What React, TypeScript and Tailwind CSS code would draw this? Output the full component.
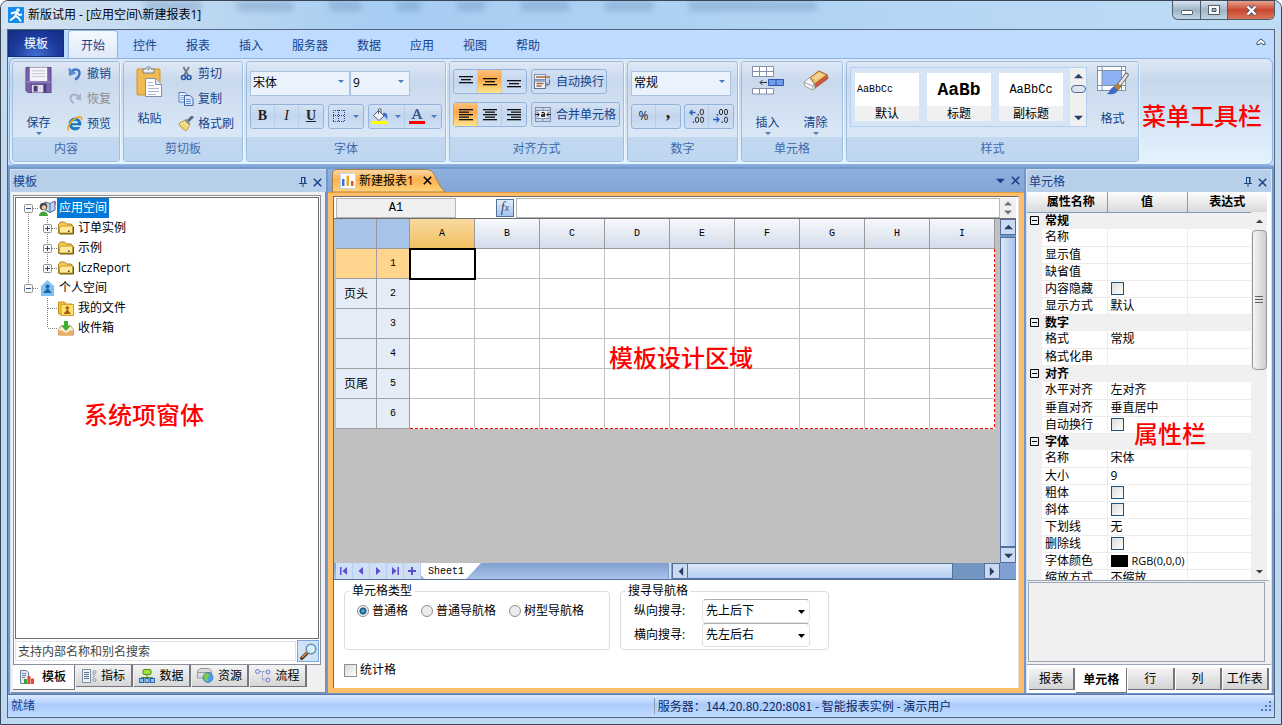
import React from "react";

type Kids = { children?: React.ReactNode };

/* ---------- small shared glyphs ---------- */

function Caret({ className = "" }: { className?: string }) {
  return (
    <svg width="6" height="3" viewBox="0 0 6 3" className={className} aria-hidden="true">
      <path d="M0 0h6L3 3z" fill="#4a7ab8" />
    </svg>
  );
}

function Tri({ dir, fill = "#2b3f66", size = 8 }: { dir: "up" | "down" | "left" | "right"; fill?: string; size?: number }) {
  const d = {
    up: "M0 7L5 2L10 7z",
    down: "M0 3L5 8L10 3z",
    left: "M8 0L3 5L8 10z",
    right: "M2 0L7 5L2 10z",
  }[dir];
  return (
    <svg width={size} height={size} viewBox="0 0 10 10" aria-hidden="true">
      <path d={d} fill={fill} />
    </svg>
  );
}

function PinIcon() {
  return (
    <svg width="8" height="10" viewBox="0 0 8 10" aria-hidden="true">
      <path d="M2.500 0v6M5.500 0v6M6 0v6M2 .5h4.500M0 6.500h8M4 6.500V10" stroke="#1c4587" fill="none" />
    </svg>
  );
}

function CloseIcon({ color = "#1c4587" }: { color?: string }) {
  return (
    <svg width="9" height="9" viewBox="0 0 9 9" aria-hidden="true">
      <path d="M.8.8l7.4 7.4M8.2.8L.8 8.2" stroke={color} strokeWidth="1.6" />
    </svg>
  );
}

/* ---------- ribbon icons ---------- */

function SaveIcon() {
  return (
    <svg width="27" height="28" viewBox="0 0 28 28" aria-hidden="true">
      <path d="M1 1h26v26H3l-2-2z" fill="#7a62ab" stroke="#5b4590" />
      <rect x="5" y="1" width="18" height="14" fill="#f4f4fa" />
      <path d="M7 4.5h14M7 7.5h14M7 10.500h14" stroke="#c3c3cf" />
      <rect x="6" y="18" width="16" height="9" fill="#4b3a7c" />
      <rect x="7" y="19" width="12" height="8" fill="#dcdce8" />
      <rect x="9" y="20" width="4" height="6" fill="#4b3a7c" />
      <path d="M1 16h26" stroke="#a18fcb" />
    </svg>
  );
}

function UndoIcon() {
  return (
    <svg width="14" height="14" viewBox="0 0 14 14" aria-hidden="true">
      <path d="M4 4.500C6 1.500 12 2 11.500 6.500C11.200 9.500 9 11.500 7 12.500" fill="none" stroke="#3f78c9" strokeWidth="2.400" />
      <path d="M1 1.500L1.500 8.500L7.500 6z" fill="#5b93dd" stroke="#2d62ae" strokeWidth=".6" />
    </svg>
  );
}

function RedoIcon() {
  return (
    <svg width="14" height="14" viewBox="0 0 14 14" aria-hidden="true">
      <path d="M10 4.500C8 1.500 2 2 2.500 6.500C2.800 9 4.500 10.500 6 11.500" fill="none" stroke="#a3b3c8" strokeWidth="2" />
      <path d="M13 1.500v7L7 6.500z" fill="#a3b3c8" />
    </svg>
  );
}

function BrowserIcon() {
  return (
    <svg width="16" height="16" viewBox="0 0 16 16" aria-hidden="true">
      <circle cx="8" cy="8" r="4.800" fill="#bfe6fb" stroke="#1f7cc4" strokeWidth="3.200" />
      <path d="M3.500 8.300h10" stroke="#1f6cb0" strokeWidth="2" />
      <path d="M9 10.300h5" stroke="#d6ecf8" strokeWidth="1.400" />
      <path d="M2 14.500C-1 12 4 4 10 1.500C13 .3 15.500.5 14.500 4" fill="none" stroke="#efab1e" strokeWidth="1.700" />
    </svg>
  );
}

function PasteIcon() {
  return (
    <svg width="27" height="31" viewBox="0 0 27 31" aria-hidden="true">
      <rect x="1" y="3" width="23" height="26" rx="1" fill="#f0b951" stroke="#cf9530" />
      <path d="M7 3h3c0-3 5-3 5 0h3v4H7z" fill="#e9edf2" stroke="#76818f" />
      <circle cx="12.500" cy="3" r="1" fill="#76818f" />
      <path d="M9.500 12.500h10l6 6v12h-16z" fill="#fdfdff" stroke="#7d8fab" />
      <path d="M19.500 12.500v6h6" fill="#dde6f2" stroke="#7d8fab" />
      <path d="M12 16.500h5M12 19.500h6M12 22.500h11M12 25.500h11M12 28.500h8" stroke="#a9b8cf" />
    </svg>
  );
}

function CutIcon() {
  return (
    <svg width="14" height="15" viewBox="0 0 14 15" aria-hidden="true">
      <path d="M4.500 1L9 9.500M10 1L5 9.500" stroke="#6d7786" strokeWidth="1.800" />
      <ellipse cx="4.500" cy="11.500" rx="2" ry="2" fill="none" stroke="#2a56a8" strokeWidth="1.600" />
      <ellipse cx="10" cy="11.500" rx="2" ry="2" fill="none" stroke="#2a56a8" strokeWidth="1.600" />
    </svg>
  );
}

function CopyIcon() {
  return (
    <svg width="16" height="14" viewBox="0 0 16 14" aria-hidden="true">
      <path d="M1 .5h6l2.500 2.500v7H1z" fill="#eef4ff" stroke="#5176b8" />
      <path d="M2.500 3.500h4M2.500 5.500h4M2.500 7.500h4" stroke="#7f9fd8" />
      <path d="M6.500 3.500h5.500l3 3v7h-8.500z" fill="#dce9ff" stroke="#3f66ad" />
      <path d="M8 7.500h5M8 9.500h5M8 11.500h5" stroke="#6d90d0" />
    </svg>
  );
}

function BrushIcon() {
  return (
    <svg width="16" height="15" viewBox="0 0 16 15" aria-hidden="true">
      <path d="M10 5L14 1.200" stroke="#5f658a" strokeWidth="3" strokeLinecap="round" />
      <path d="M7 3.500L11.800 8.500" stroke="#9297ac" strokeWidth="2.400" />
      <path d="M6.500 4.500L1 7.500C2 11 5 14 8.500 14.500L11.500 9.500z" fill="#f7e68e" stroke="#c0963a" />
      <path d="M3 9l3.500 3.500M5 8l3.500 3.500" stroke="#d9b65a" />
    </svg>
  );
}

function BorderIcon() {
  return (
    <svg width="12" height="12" viewBox="0 0 12 12" aria-hidden="true">
      <path d="M0 .5h12M0 5.500h12M0 11.500h12M.5 0v12M5.500 0v12M11.500 0v12" stroke="#2f3f94" strokeDasharray="1 1" />
    </svg>
  );
}

function FillIcon() {
  return (
    <svg width="17" height="16" viewBox="0 0 17 16" aria-hidden="true">
      <path d="M6.500 2.500L12 8L7 12.500L1.500 7.500z" fill="#f3f7fd" stroke="#55606f" />
      <path d="M6.500 6V1.500C6.500 0 9 0 9 2v3" fill="none" stroke="#55606f" />
      <path d="M11 5C15 4 16 7 15 12C14 9 13 8 11.500 8z" fill="#3d6fc4" />
      <rect x="0" y="13" width="16" height="3" fill="#ffff00" />
    </svg>
  );
}

function FontColorIcon() {
  return (
    <svg width="16" height="16" viewBox="0 0 16 16" aria-hidden="true">
      <path d="M4 10.500L7.500 1.500h1" stroke="#3c5b94" strokeWidth="1.200" fill="none" />
      <path d="M8 1.500L11.500 10.500" stroke="#3c5b94" strokeWidth="2.200" fill="none" />
      <path d="M5 7.500h5.500M2.500 10.500h3.500M9.500 10.500h4" stroke="#3c5b94" strokeWidth="1" fill="none" />
      <rect x="0" y="13" width="16" height="3" fill="#ff0000" />
    </svg>
  );
}

function LinesIcon({ rows, top }: { rows: [number, number][]; top: number }) {
  const step = rows.length > 3 ? 2.5 : 3;
  return (
    <svg width="16" height="14" viewBox="0 0 16 14" aria-hidden="true">
      {rows.map(([x, w], i) => (
        <rect key={i} x={x} y={top + i * step} width={w} height="1.300" fill="#101010" />
      ))}
    </svg>
  );
}

function WrapIcon() {
  return (
    <svg width="17" height="15" viewBox="0 0 17 15" aria-hidden="true">
      <rect x=".5" y=".5" width="11" height="5" fill="#eef3fa" stroke="#7e90ae" />
      <path d="M2 3h14" stroke="#a6673d" strokeWidth="1.500" />
      <rect x=".5" y="7" width="11" height="7.500" fill="#eef3fa" stroke="#5f7293" />
      <path d="M2.500 9.500h7M2.500 12h5" stroke="#a6673d" strokeWidth="1.500" />
      <path d="M15.500 5.500v5h-3M14 8.500l-2 2l2 2" stroke="#5f7293" fill="none" />
    </svg>
  );
}

function MergeIcon() {
  return (
    <svg width="16" height="15" viewBox="0 0 16 15" aria-hidden="true">
      <rect x=".5" y=".5" width="15" height="14" fill="#cbd7e8" stroke="#7f92b2" />
      <path d="M.5 3.500h15M.5 11.500h15M8 .5v3M8 11.500v3" stroke="#7f92b2" />
      <rect x="4.500" y="4" width="7" height="7" fill="#fff" />
      <path d="M0 7.500h4M2.200 5.500l2 2l-2 2M16 7.500h-4M13.800 5.500l-2 2l2 2" stroke="#222" fill="none" />
      <path d="M6.500 5.800c2-1 3-.2 3 1v2.900M9.500 7.500c-2 0-3 .4-3 1.200s2 1.200 3 0" stroke="#222" fill="none" strokeWidth="1.300" />
    </svg>
  );
}

function DecimalIcon({ more }: { more: boolean }) {
  return (
    <svg width="16" height="16" viewBox="0 0 16 16" aria-hidden="true">
      {more ? (
        <>
          <path d="M6.500 4.500H1M3.500 2L1 4.500L3.500 7" stroke="#2e62c0" strokeWidth="1.400" fill="none" />
          <ellipse cx="12.800" cy="4" rx="1.700" ry="2.800" stroke="#333" fill="none" />
          <ellipse cx="8" cy="11.800" rx="1.600" ry="2.800" stroke="#333" fill="none" />
          <ellipse cx="13" cy="11.800" rx="1.600" ry="2.800" stroke="#333" fill="none" />
          <rect x="8.500" y="6" width="1.400" height="1.400" fill="#333" />
          <rect x="3.800" y="13.500" width="1.400" height="1.400" fill="#333" />
        </>
      ) : (
        <>
          <path d="M0 11.500h6M3.500 9L6 11.500L3.500 14" stroke="#2e62c0" strokeWidth="1.400" fill="none" />
          <ellipse cx="8" cy="4" rx="1.600" ry="2.800" stroke="#333" fill="none" />
          <ellipse cx="13" cy="4" rx="1.600" ry="2.800" stroke="#333" fill="none" />
          <ellipse cx="13" cy="11.800" rx="1.600" ry="2.800" stroke="#333" fill="none" />
          <rect x="3.800" y="6" width="1.400" height="1.400" fill="#333" />
          <rect x="8.500" y="13.500" width="1.400" height="1.400" fill="#333" />
        </>
      )}
    </svg>
  );
}

function InsertCellIcon() {
  return (
    <svg width="32" height="29" viewBox="0 0 32 29" aria-hidden="true">
      <path d="M.5.5h21v10H.5zM.5 5.500h21M7.500.5v10M14.500.5v10" fill="#fff" stroke="#8390a8" />
      <path d="M.5 22.500h21v5.500H.5zM7.500 22.500v5.500M14.500 22.500v5.500" fill="#fff" stroke="#8390a8" />
      <path d="M16.500 13.500h15v6h-15zM24 13.500v6" fill="#6f9be8" stroke="#3158ac" />
      <path d="M15 16.500H8M10.500 14L8 16.500L10.500 19" stroke="#333" fill="none" />
    </svg>
  );
}

function EraserIcon() {
  return (
    <svg width="26" height="26" viewBox="0 0 28 27" aria-hidden="true">
      <g transform="translate(0 2)">
        <path d="M17 3L26 7L27 11L12 22L7 11z" fill="#d0563f" stroke="#a5432f" strokeWidth=".8" />
        <path d="M17 3L26 7L12.500 17L7.500 10z" fill="#e9bc62" stroke="#a5562f" strokeWidth=".8" />
        <path d="M17.500 4.500L23 7L14 13L10 10.200z" fill="#f3d591" />
        <path d="M7 10L1 15L2 19L10.500 23.500L13 21.500L12 16.500z" fill="#f6f6f6" stroke="#8a8a8a" strokeWidth=".8" />
        <path d="M1 15l9.500 4.200l1.500-2.700M10.500 19v4" stroke="#8a8a8a" fill="none" strokeWidth=".8" />
      </g>
    </svg>
  );
}

function FormatIcon() {
  return (
    <svg width="32" height="29" viewBox="0 0 32 29" aria-hidden="true">
      <rect x=".5" y=".5" width="28" height="24" fill="#fdfdff" stroke="#7f93ad" />
      <rect x="5" y="5" width="19" height="14" fill="#8eb0f4" />
      <path d="M.5 4.500h28M.5 19.500h28M5 .5v24M24.500.5v24" stroke="#7f93ad" fill="none" />
      <path d="M29.500 9L22 19" stroke="#6a6a6a" strokeWidth="4.500" strokeLinecap="round" />
      <path d="M29.500 9L22 19" stroke="#e4e4e4" strokeWidth="2.600" strokeLinecap="round" />
      <path d="M20.500 17.500L16.500 21l4 4l3.500-4.500z" fill="#b7823a" stroke="#86591f" strokeWidth=".7" />
      <path d="M17 20.500C13 22 13 26 10 28C15 29 20 28 20.500 24z" fill="#3f6cc8" />
    </svg>
  );
}

/* ---------- ribbon building blocks ---------- */

function Group({ title, width, children }: Kids & { title: string; width: string }) {
  return (
    <section
      className={`${width} flex shrink-0 flex-col overflow-hidden rounded-[3px] border border-[#9fbfdf] shadow-[1px_1px_0_#eef6fd]`}
    >
      <div className="flex flex-1 gap-[3px] bg-linear-to-b from-[#dee8f5] via-[#c9d9ed] via-25% to-[#dae8f6] pt-[7px] pl-[3px]">
        {children}
      </div>
      <h2 className="h-6 bg-linear-to-b from-[#c2d8f0] to-[#bfd6f1] text-center text-xs leading-6 text-[#3e6aaa]">{title}</h2>
    </section>
  );
}

function BigButton({ icon, label, arrow = false }: { icon: React.ReactNode; label: string; arrow?: boolean }) {
  return (
    <button className="-mt-1 flex w-[45px] flex-col items-center text-xs text-[#15428b]">
      <span className="flex h-[34px] items-start pt-px">{icon}</span>
      <span className={arrow ? "mt-4 leading-4" : "mt-3 leading-4"}>{label}</span>
      {arrow && <Caret className="mt-px" />}
    </button>
  );
}

function SmallButton({ icon, label, muted = false }: { icon: React.ReactNode; label: string; muted?: boolean }) {
  return (
    <button className={`flex h-[25px] items-center gap-1 text-xs ${muted ? "text-[#8d8d8d]" : "text-[#15428b]"}`}>
      <span className="flex w-4 justify-center">{icon}</span>
      {label}
    </button>
  );
}

function Cluster({ children }: Kids) {
  return (
    <div className="flex h-[25px] divide-x divide-[#b4cdea] rounded-[3px] border border-[#93b3dc] bg-linear-to-b from-[#d4e2f3] via-[#c3d6ee] via-50% to-[#cfe0f4]">
      {children}
    </div>
  );
}

function Tool({ label, width = "w-6", active = false, children }: Kids & { label: string; width?: string; active?: boolean }) {
  return (
    <button
      aria-label={label}
      className={`${width} flex items-center justify-center text-[#222] ${active ? "bg-linear-to-b from-[#fbc27a] via-[#fba74a] via-40% to-[#ffe58a]" : ""}`}
    >
      {children}
    </button>
  );
}

function Combo({ label, value, width }: { label: string; value: string; width: string }) {
  return (
    <div className={`relative ${width}`}>
      <select
        aria-label={label}
        className="h-[25px] w-full appearance-none border border-[#abc4e3] bg-[#eaf2fb] pl-0.5 text-xs text-black"
      >
        <option>{value}</option>
      </select>
      <Caret className="pointer-events-none absolute top-[11px] right-1.5" />
    </div>
  );
}

function StyleCard({ sample, name, sampleClass }: { sample: string; name: string; sampleClass: string }) {
  return (
    <button className="flex h-12 w-16 flex-col bg-white text-black">
      <span className={`flex w-full flex-1 items-center font-['Liberation_Mono','Noto_Sans_CJK_SC',monospace] ${sampleClass}`}>{sample}</span>
      <span className="h-[15px] w-full bg-[#f0f0f0] text-center text-xs leading-[15px]">{name}</span>
    </button>
  );
}

const LINES: Record<string, [number, number][]> = {
  v: [[1, 14], [3, 10], [1, 14]],
  left: [[1, 14], [1, 10], [1, 14], [1, 10], [1, 14]],
  center: [[1, 14], [3, 10], [1, 14], [3, 10], [1, 14]],
  right: [[1, 14], [5, 10], [1, 14], [5, 10], [1, 14]],
};

function Ribbon() {
  return (
    <div className="mx-px flex h-[107px] shrink-0 gap-[3px] overflow-hidden rounded-md border border-[#8db2e3] bg-linear-to-b from-[#dfe9f5] via-[#c7d8ed] via-20% to-[#e3f3fe] p-0.5">
      <Group title="内容" width="w-[108px]">
        <BigButton icon={<SaveIcon />} label="保存" arrow />
        <div className="-mt-2 flex flex-col pl-[3px]">
          <SmallButton icon={<UndoIcon />} label="撤销" />
          <SmallButton icon={<RedoIcon />} label="恢复" muted />
          <SmallButton icon={<BrowserIcon />} label="预览" />
        </div>
      </Group>
      <Group title="剪切板" width="w-[120px]">
        <BigButton icon={<PasteIcon />} label="粘贴" />
        <div className="-mt-2 flex flex-col pl-[3px]">
          <SmallButton icon={<CutIcon />} label="剪切" />
          <SmallButton icon={<CopyIcon />} label="复制" />
          <SmallButton icon={<BrushIcon />} label="格式刷" />
        </div>
      </Group>
      <Group title="字体" width="w-[200px]">
        <div className="flex flex-col gap-2">
          <div className="flex">
            <Combo label="字体" value="宋体" width="w-[100px]" />
            <Combo label="字号" value="9" width="w-[60px]" />
          </div>
          <div className="flex gap-1">
            <Cluster>
              <Tool label="粗体"><b className="font-['Liberation_Serif',serif] text-sm font-bold">B</b></Tool>
              <Tool label="斜体"><i className="font-['Liberation_Serif',serif] text-sm">I</i></Tool>
              <Tool label="下划线"><u className="font-['Liberation_Serif',serif] text-sm font-bold">U</u></Tool>
            </Cluster>
            <Cluster>
              <Tool label="边框" width="w-[34px] gap-2"><BorderIcon /><Caret /></Tool>
            </Cluster>
            <Cluster>
              <Tool label="填充颜色" width="w-9 gap-1.5"><FillIcon /><Caret /></Tool>
              <Tool label="字体颜色" width="w-9 gap-1.5"><FontColorIcon /><Caret /></Tool>
            </Cluster>
          </div>
        </div>
      </Group>
      <Group title="对齐方式" width="w-[175px]">
        <div className="flex flex-col gap-2">
          <div className="flex gap-1">
            <Cluster>
              <Tool label="顶端对齐"><LinesIcon rows={LINES.v} top={1} /></Tool>
              <Tool label="垂直居中" active><LinesIcon rows={LINES.v} top={3} /></Tool>
              <Tool label="底端对齐"><LinesIcon rows={LINES.v} top={5} /></Tool>
            </Cluster>
            <Cluster>
              <button className="flex items-center gap-[5px] px-0.5 text-xs text-[#15428b]"><WrapIcon />自动换行</button>
            </Cluster>
          </div>
          <div className="flex gap-1">
            <Cluster>
              <Tool label="左对齐" active><LinesIcon rows={LINES.left} top={1} /></Tool>
              <Tool label="居中"><LinesIcon rows={LINES.center} top={1} /></Tool>
              <Tool label="右对齐"><LinesIcon rows={LINES.right} top={1} /></Tool>
            </Cluster>
            <Cluster>
              <button className="flex items-center gap-[5px] px-[3px] text-xs text-[#15428b]"><MergeIcon />合并单元格</button>
            </Cluster>
          </div>
        </div>
      </Group>
      <Group title="数字" width="w-[111px]">
        <div className="flex flex-col gap-2">
          <Combo label="数字格式" value="常规" width="w-[100px]" />
          <div className="flex gap-[3px]">
            <Cluster>
              <Tool label="百分比"><span className="text-xs">%</span></Tool>
              <Tool label="千位分隔"><b className="pb-2 font-['Liberation_Serif',serif] text-lg leading-3">,</b></Tool>
            </Cluster>
            <Cluster>
              <Tool label="增加小数位"><DecimalIcon more /></Tool>
              <Tool label="减少小数位"><DecimalIcon more={false} /></Tool>
            </Cluster>
          </div>
        </div>
      </Group>
      <Group title="单元格" width="w-[102px]">
        <BigButton icon={<InsertCellIcon />} label="插入" arrow />
        <BigButton icon={<EraserIcon />} label="清除" arrow />
      </Group>
      <Group title="样式" width="w-[293px]">
        <div className="-mt-0.5 flex h-[60px] border border-[#b5cfee] bg-[#d6e5f6]">
          <div className="flex gap-2 py-[5px] pr-[7px] pl-1">
            <StyleCard sample="AaBbCc" name="默认" sampleClass="pl-0.5 text-[10px]" />
            <StyleCard sample="AaBb" name="标题" sampleClass="justify-center text-lg font-bold" />
            <StyleCard sample="AaBbCc" name="副标题" sampleClass="justify-center text-xs" />
          </div>
          <div className="flex w-4 flex-col items-center gap-1 bg-[#f0f0f0] py-1">
            <button aria-label="上一行"><Tri dir="up" size={9} /></button>
            <span className="h-2 w-[15px] rounded-sm border border-[#5a6c94] bg-[#dbe6f3]" />
            <button aria-label="下一行" className="mt-auto"><Tri dir="down" size={9} /></button>
          </div>
        </div>
        <BigButton icon={<FormatIcon />} label="格式" />
      </Group>
      <p className="mt-10 font-['Liberation_Serif','Noto_Sans_CJK_SC',serif] text-2xl leading-8 font-medium whitespace-nowrap text-[#ff0000]">
        菜单工具栏
      </p>
    </div>
  );
}

/* ---------- title bar and menu ---------- */

function TitleBar() {
  const smudges = ["w-14", "w-14", "w-8", "w-6", "w-7", "w-12", "w-12", "w-32"];
  return (
    <header className="relative flex h-7 shrink-0 items-center overflow-hidden bg-linear-to-r from-[#d5e3f1] via-[#a6cdf2] via-30% to-[#bfdcf6] pl-[7px]">
      <div aria-hidden="true" className="absolute inset-x-0 top-0 flex items-start gap-9 pl-36 opacity-25 blur-[3px]">
        {smudges.map((w, i) => (
          <span key={i} className={`h-2.5 ${w} bg-[#456a95]`} />
        ))}
      </div>
      <div className="relative flex flex-1 items-center gap-1">
        <svg width="16" height="16" viewBox="0 0 16 16" aria-hidden="true">
          <rect width="16" height="16" rx="1" fill="#138cf0" />
          <circle cx="10" cy="3" r="1.800" fill="#fff" />
          <path d="M3 6.500L8.500 5L11 8L14 7.500M9 5.500L6.500 10L2 13.500M7 8.500L10.500 11L13 14.500" stroke="#fff" strokeWidth="2" fill="none" />
        </svg>
        <h1 className="text-xs text-black">新版试用 - [应用空间\新建报表1]</h1>
      </div>
      <div className="relative mr-1.5 flex h-[19px] self-start overflow-hidden rounded-b-md border border-t-0 border-[#4d5a69]">
        <button aria-label="最小化" className="flex w-7 items-center justify-center border-r border-[#4d5a69] bg-linear-to-b from-[#d8e4ee] via-[#9fb4c7] via-50% to-[#bfd4e4] pt-1">
          <svg width="12" height="5" viewBox="0 0 12 5" aria-hidden="true"><rect x=".5" y=".5" width="11" height="4" rx="1" fill="#fff" stroke="#505868" /></svg>
        </button>
        <button aria-label="最大化" className="flex w-[27px] items-center justify-center border-r border-[#4d5a69] bg-linear-to-b from-[#d8e4ee] via-[#9fb4c7] via-50% to-[#bfd4e4]">
          <svg width="12" height="10" viewBox="0 0 12 10" aria-hidden="true"><path d="M.5.5h11v9H.5zM4 3.500h4v3H4z" fill="#fff" fillRule="evenodd" stroke="#505868" /></svg>
        </button>
        <button aria-label="关闭" className="flex w-[46px] items-center justify-center bg-linear-to-b from-[#e5a08f] via-[#c9452b] via-50% to-[#d9775a]">
          <svg width="13" height="11" viewBox="0 0 13 11" aria-hidden="true">
            <path d="M2.500 1.500l8 8M10.500 1.500l-8 8" stroke="#505060" strokeWidth="4" />
            <path d="M2.500 1.500l8 8M10.500 1.500l-8 8" stroke="#fff" strokeWidth="2.400" />
          </svg>
        </button>
      </div>
    </header>
  );
}

function MenuTabs() {
  const tabs = ["控件", "报表", "插入", "服务器", "数据", "应用", "视图", "帮助"];
  return (
    <nav className="flex h-7 shrink-0 bg-[#bfdbff] text-xs text-[#15428b]">
      <button className="h-[27px] w-14 border border-[#12307a] bg-[radial-gradient(ellipse_at_bottom,#3f6fd2_0%,#1b3a9c_60%,#142c80_100%)] text-white">模板</button>
      <button className="-mb-px ml-1 flex w-[50px] items-center justify-center rounded-t-[4px] border border-b-0 border-[#8db2e3] bg-linear-to-b from-[#f4f9ff] to-[#dfe9f5] pt-0.5">开始</button>
      <div className="flex flex-1 gap-px pl-px">
        {tabs.map((t) => (
          <button key={t} className="px-3.5 pt-[3px]">{t}</button>
        ))}
      </div>
      <button aria-label="折叠功能区" className="mr-2 pb-1">
        <svg width="10" height="8" viewBox="0 0 10 8" aria-hidden="true">
          <path d="M1 4.500L5 1l4 3.500v2H7L5 4.800L3 6.500H1z" fill="#fff" stroke="#3c4b66" />
        </svg>
      </button>
    </nav>
  );
}

/* ---------- left panel ---------- */

function PanelHeader({ title }: { title: string }) {
  return (
    <div className="flex h-[23px] shrink-0 items-center gap-1.5 border-t border-[#d3e3f5] bg-[#b8cfe9] pt-0.5 pr-1 pl-0.5 text-xs text-[#15428b]">
      <h2 className="flex-1">{title}</h2>
      <button aria-label="固定"><PinIcon /></button>
      <button aria-label="关闭"><CloseIcon /></button>
    </div>
  );
}

type Guide = { up?: boolean; down?: boolean; right?: boolean; box?: "+" | "-" };

function GuideCell({ up, down, right, box }: Guide) {
  return (
    <svg width="19" height="20" viewBox="0 0 19 20" className="shrink-0" aria-hidden="true">
      {up && <path d="M9.500 0v10" stroke="#808080" strokeDasharray="1 1" />}
      {down && <path d="M9.500 10v10" stroke="#808080" strokeDasharray="1 1" />}
      {right && <path d="M10 10.500h9" stroke="#808080" strokeDasharray="1 1" />}
      {box && (
        <>
          <rect x="5.500" y="6.500" width="8" height="8" rx="1" fill="#fafafa" stroke="#919191" />
          <path d={box === "+" ? "M7 10.500h5M9.500 8v5" : "M7 10.500h5"} stroke="#2a4a90" />
        </>
      )}
    </svg>
  );
}

function FolderIcon() {
  return (
    <svg width="16" height="14" viewBox="0 0 16 14" aria-hidden="true">
      <path d="M.5 12.500V3.500L2.500 1h4L8.500 3H13L15 5v7.500z" fill="#f3c94f" stroke="#a57c22" />
      <path d="M1.500 12V7L3 5h11.500v7z" fill="#ffe99a" stroke="#c79c35" />
      <path d="M2 13h13.500V6" stroke="#6b5013" fill="none" />
      <rect x="10" y="9.500" width="1.500" height="1.500" fill="#4c370b" />
    </svg>
  );
}

function UserBookIcon() {
  return (
    <svg width="17" height="16" viewBox="0 0 17 16" aria-hidden="true">
      <path d="M6 2l5 1.500L16 1v9l-5 2.500L6 10z" fill="#c3d5ef" stroke="#51699a" />
      <path d="M11 3.500v9" stroke="#51699a" />
      <rect x="15.500" y="1.500" width="1.500" height="3" fill="#d64ac0" />
      <circle cx="4.500" cy="6.500" r="3.800" fill="#4a4a4a" />
      <circle cx="5" cy="7.500" r="2.200" fill="#f2c9a0" />
      <path d="M0 16c0-6 9-6 9 0z" fill="#43a53b" />
    </svg>
  );
}

function HomeIcon() {
  return (
    <svg width="15" height="16" viewBox="0 0 15 16" aria-hidden="true">
      <path d="M7.500 0L15 7h-1v9H1V7H0z" fill="#7fc2f2" />
      <circle cx="7.500" cy="6.500" r="2" fill="#1d64a8" />
      <path d="M3.500 13c0-2 2-1.500 3-4.500h2c1 3 3 2.500 3 4.500z" fill="#1d64a8" />
    </svg>
  );
}

function MyFilesIcon() {
  return (
    <svg width="16" height="15" viewBox="0 0 16 15" aria-hidden="true">
      <path d="M.5 13V1h6l1.500 2h6v10z" fill="#f0c23c" stroke="#c4921f" />
      <rect x="3" y="3.500" width="12.500" height="11" fill="#ffe169" stroke="#d0a12c" />
      <circle cx="9.300" cy="7" r="1.800" fill="#a55b12" />
      <path d="M6 13c0-2 1.500-1.500 2.500-4h1.600c1 2.500 2.500 2 2.500 4z" fill="#a55b12" />
    </svg>
  );
}

function InboxIcon() {
  return (
    <svg width="16" height="15" viewBox="0 0 16 15" aria-hidden="true">
      <path d="M.5 8.500L3 5h10l2.500 3.500v5.500H.5z" fill="#fbeed9" stroke="#c9a275" />
      <path d="M.5 9.500h4l1.500 2h4l1.500-2h4v5H.5z" fill="#e9ae66" />
      <path d="M6 0h4v4.500h3L8 10L3 4.500h3z" fill="#3eaf35" />
    </svg>
  );
}

type TreeRow = { guides: Guide[]; icon: React.ReactNode; label: string; selected?: boolean };

const TREE: TreeRow[] = [
  { guides: [{ box: "-", down: true, right: true }], icon: <UserBookIcon />, label: "应用空间", selected: true },
  { guides: [{ up: true, down: true }, { up: true, down: true, right: true, box: "+" }], icon: <FolderIcon />, label: "订单实例" },
  { guides: [{ up: true, down: true }, { up: true, down: true, right: true, box: "+" }], icon: <FolderIcon />, label: "示例" },
  { guides: [{ up: true, down: true }, { up: true, right: true, box: "+" }], icon: <FolderIcon />, label: "lczReport" },
  { guides: [{ up: true, right: true, box: "-" }], icon: <HomeIcon />, label: "个人空间" },
  { guides: [{}, { up: true, down: true, right: true }], icon: <MyFilesIcon />, label: "我的文件" },
  { guides: [{}, { up: true, right: true }], icon: <InboxIcon />, label: "收件箱" },
];

function ReportIcon() {
  return (
    <svg width="14" height="15" viewBox="0 0 14 15" aria-hidden="true">
      <path d="M.5.5h6l2 2v11h-8z" fill="#dfe8f3" stroke="#6f8299" />
      <path d="M2 3.500h4M2 5.500h4M2 7.500h3" stroke="#6f86a3" />
      <path d="M4 9h3v5H4z" fill="#3ba043" />
      <path d="M7.500 6h3v8h-3z" fill="#e04b2f" />
      <path d="M11 8.500h3V14h-3z" fill="#e04b2f" />
    </svg>
  );
}

function IndexIcon() {
  return (
    <svg width="15" height="14" viewBox="0 0 15 14" aria-hidden="true">
      <path d="M.5.500h8v13h-8z" fill="#eef2f8" stroke="#7f8fa3" />
      <path d="M2 3.500h5M2 5.500h5M2 7.500h5M2 9.500h5" stroke="#5a738f" />
      <circle cx="12.500" cy="3" r="1.500" fill="#dfe9e9" stroke="#7da0a0" />
      <circle cx="12.500" cy="11" r="1.500" fill="#dfe9e9" stroke="#7da0a0" />
      <path d="M10.500 5l2.500 1.500L10.500 9" stroke="#7da0a0" fill="none" />
    </svg>
  );
}

function DataIcon() {
  return (
    <svg width="16" height="14" viewBox="0 0 16 14" aria-hidden="true">
      <rect x="4" y=".5" width="8" height="5" rx="1" fill="#a3e03a" stroke="#4b8f1c" />
      <path d="M8 5.500v3M2.500 10V8.500h11V10" stroke="#4b8f1c" fill="none" />
      <rect x=".5" y="9.500" width="4" height="4" fill="#8fc3f2" stroke="#2967b0" />
      <rect x="6" y="9.500" width="4" height="4" fill="#8fc3f2" stroke="#2967b0" />
      <rect x="11.500" y="9.500" width="4" height="4" fill="#8fc3f2" stroke="#2967b0" />
    </svg>
  );
}

function ResourceIcon() {
  return (
    <svg width="17" height="15" viewBox="0 0 17 15" aria-hidden="true">
      <path d="M.5 3L3 .5h9L14.500 3v7H.5z" fill="#dcdcdc" stroke="#9a9a9a" />
      <path d="M1 4.500h13" stroke="#9a9a9a" />
      <circle cx="11" cy="9.500" r="5" fill="#4aa0e6" stroke="#2467a8" strokeWidth=".6" />
      <path d="M7 7c2-3 6-2 5 .5s-2 2-1 4.500s-3 1-3.500-1z" fill="#7ccc45" />
    </svg>
  );
}

function FlowIcon() {
  return (
    <svg width="16" height="14" viewBox="0 0 16 14" aria-hidden="true">
      <path d="M4.500 2.500h6M7.500 2.500v8.500h3" stroke="#8a99b5" strokeDasharray="2 1" fill="none" />
      <circle cx="2.500" cy="2.500" r="2" fill="#e0e3fb" stroke="#6f78cc" />
      <circle cx="13" cy="3" r="2" fill="#e0e3fb" stroke="#6f78cc" />
      <circle cx="13" cy="11" r="2" fill="#e0e3fb" stroke="#6f78cc" />
    </svg>
  );
}

function LeftPanel() {
  const tabs = [
    { icon: <ReportIcon />, label: "模板" },
    { icon: <IndexIcon />, label: "指标" },
    { icon: <DataIcon />, label: "数据" },
    { icon: <ResourceIcon />, label: "资源" },
    { icon: <FlowIcon />, label: "流程" },
  ];
  return (
    <aside className="flex w-[316px] shrink-0 flex-col border-l border-[#d3e3f5]">
      <PanelHeader title="模板" />
      <div className="flex min-h-0 flex-1 flex-col border-r border-b border-[#7c8ba0] bg-[#f0f0f0] pt-[3px] pr-1 pb-0.5 pl-[2px]">
        <div className="flex min-h-0 flex-1 flex-col border border-[#8a8f98] bg-white p-px">
          <div className="relative min-h-0 flex-1 border border-[#6d6d6d] bg-white pl-[3px]">
            <ul>
              {TREE.map((row) => (
                <li key={row.label} className="flex h-5 items-center text-xs text-black">
                  {row.guides.map((g, i) => (
                    <GuideCell key={i} {...g} />
                  ))}
                  <span className="flex w-[18px] shrink-0 justify-center">{row.icon}</span>
                  <button className={`ml-px px-0.5 leading-5 ${row.selected ? "bg-[#0078d7] text-white" : ""}`}>{row.label}</button>
                </li>
              ))}
            </ul>
            <p className="absolute top-[201px] left-[68px] text-2xl leading-8 font-medium text-[#ff0000]">系统项窗体</p>
          </div>
          <div className="flex h-6 shrink-0 items-center">
            <input
              aria-label="搜索"
              placeholder="支持内部名称和别名搜索"
              className="h-5 min-w-0 flex-1 border border-[#e2e3ea] bg-white pl-0.5 text-xs placeholder:text-[#444]"
            />
            <button aria-label="执行搜索" className="ml-px flex h-[22px] w-[22px] items-center justify-center border border-[#7ba6d8] bg-[#cfe2f6]">
              <svg width="17" height="17" viewBox="0 0 17 17" aria-hidden="true">
                <path d="M1.800 15.200l5.500-5.500" stroke="#5b3420" strokeWidth="3.400" strokeLinecap="round" />
                <path d="M2 14.500l5-5" stroke="#e39a4a" strokeWidth="1.300" />
                <circle cx="11" cy="6" r="4.800" fill="#d6f1fb" stroke="#6d8fae" strokeWidth="1.600" />
              </svg>
            </button>
          </div>
        </div>
        <div className="flex h-[25px] shrink-0 items-start gap-px text-xs text-black">
          {tabs.map((t, i) => (
            <button
              key={t.label}
              className={
                i === 0
                  ? "flex h-[25px] w-[62px] items-center gap-2 border-r border-b border-[#75757f] bg-white pl-[7px] font-medium"
                  : "flex h-[22px] w-[57px] items-center justify-center gap-1 border-r-2 border-b border-[#75757f] bg-linear-to-b from-[#f5f5f5] to-[#d6d6d6]"
              }
            >
              {t.icon}
              {t.label}
            </button>
          ))}
        </div>
      </div>
    </aside>
  );
}

/* ---------- centre: sheet ---------- */

const COLS = ["A", "B", "C", "D", "E", "F", "G", "H", "I"];
const SHEET_ROWS = [
  { n: 1, tag: "" },
  { n: 2, tag: "页头" },
  { n: 3, tag: "" },
  { n: 4, tag: "" },
  { n: 5, tag: "页尾" },
  { n: 6, tag: "" },
];

function Sheet() {
  return (
    <div className="relative w-[659px]">
      <table className="w-full table-fixed border-separate border-spacing-0 text-center text-xs text-black">
        <colgroup>
          <col className="w-[41px]" />
          <col className="w-[33px]" />
          {COLS.map((c) => (
            <col key={c} className="w-[65px]" />
          ))}
        </colgroup>
        <thead>
          <tr className="h-[30px]">
            <th className="border-r border-b border-[#9a9a9a] bg-[#a7c3ea]" />
            <th className="border-r border-b border-[#9a9a9a] bg-[#a7c3ea]" />
            {COLS.map((c, i) => (
              <th
                key={c}
                className={`border-r border-b border-[#9a9a9a] bg-linear-to-b font-['Liberation_Mono',monospace] text-[10px] font-normal ${i === 0 ? "from-[#f9d99f] to-[#f1c05f]" : "from-[#f7f9fc] to-[#d4dcea]"}`}
              >
                {c}
              </th>
            ))}
          </tr>
        </thead>
        <tbody className="[&_td]:p-0">
          {SHEET_ROWS.map((r) => (
            <tr key={r.n} className="h-[30px]">
              <td className={`border-r border-b border-[#a0a0a0] ${r.n === 1 ? "bg-[#ffd58d]" : "bg-[#e4ecf7]"}`}>{r.tag}</td>
              <td className={`border-r border-b border-[#a0a0a0] font-['Liberation_Mono',monospace] text-[10px] ${r.n === 1 ? "bg-[#ffd58d]" : "bg-[#e4ecf7]"}`}>{r.n}</td>
              {COLS.map((c, i) => (
                <td
                  key={c}
                  className={`border-r border-b border-[#c0c0c0] bg-white ${i === 0 && r.n === 1 ? "outline-2 -outline-offset-1 outline-black" : ""}`}
                />
              ))}
            </tr>
          ))}
        </tbody>
      </table>
      {/* print area boundary */}
      <svg className="pointer-events-none absolute right-0 bottom-0 h-[180px] w-[585px]" viewBox="0 0 585 180" aria-hidden="true">
        <path d="M0 179.500h585M584.500 0v180" stroke="#fff" />
        <path d="M0 179.500h585M584.500 0v180" stroke="#ff0000" strokeDasharray="3 2" />
      </svg>
    </div>
  );
}

function NavGlyph({ kind }: { kind: number }) {
  const paths = [
    "M1 1h1.500v8H1zM8 1v8L3.500 5z",
    "M7 1v8L2.500 5z",
    "M3 1v8l4.500-4z",
    "M2 1v8l4.500-4zM7.500 1H9v8H7.500z",
    "M4 1h2v3h3v2H6v3H4V6H1V4h3z",
  ];
  return (
    <svg width="10" height="10" viewBox="0 0 10 10" aria-hidden="true">
      <path d={paths[kind]} fill="#5a4fcf" />
    </svg>
  );
}

function LabeledSelect({ id, label, value }: { id: string; label: string; value: string }) {
  return (
    <div className="flex items-center">
      <label htmlFor={id} className="w-[68px]">{label}</label>
      <div className="relative w-[108px]">
        <select id={id} className="block h-6 w-full appearance-none rounded-sm border border-[#e2e3ea] border-t-[#abadb3] bg-white pl-[3px] text-xs text-black">
          <option>{value}</option>
        </select>
        <svg width="7" height="4" viewBox="0 0 7 4" className="pointer-events-none absolute top-[11px] right-[5px]" aria-hidden="true">
          <path d="M0 0h7L3.500 4z" fill="#000" />
        </svg>
      </div>
    </div>
  );
}

function Center() {
  const radios = ["普通格", "普通导航格", "树型导航格"];
  const scrollBtn = "flex h-4 w-4 shrink-0 items-center justify-center border border-[#54709c] bg-[#c9daf2]";
  return (
    <main className="flex min-w-0 flex-1 flex-col">
      <div className="flex h-[23px] shrink-0 bg-linear-to-b from-[#8db0dd] to-[#83a5d6]">
        <div className="relative flex h-[23px] w-[118px] items-center gap-[3px] pl-2.5">
          <svg viewBox="0 0 114 23" className="absolute inset-y-0 left-1 h-[23px] w-[114px]" aria-hidden="true">
            <defs>
              <linearGradient id="tabfill" x1="0" y1="0" x2="0" y2="1">
                <stop offset="0" stopColor="#fbd9a9" />
                <stop offset=".45" stopColor="#fdb24f" />
                <stop offset="1" stopColor="#ffd27a" />
              </linearGradient>
            </defs>
            <path d="M.5 23V5Q.5 .5 5 .5h90c9 0 10 17 18.500 22.500z" fill="url(#tabfill)" stroke="#a97f4b" />
          </svg>
          <svg width="16" height="16" viewBox="0 0 16 16" className="relative ml-0.5 shrink-0" aria-hidden="true">
            <rect x=".5" y=".5" width="15" height="15" fill="#fdfeff" stroke="#c9d7ea" />
            <rect x="2" y="6" width="2.500" height="7" fill="#3d74cf" />
            <rect x="6.500" y="2.500" width="2.500" height="10.500" fill="#f0a51b" />
            <rect x="11" y="8" width="2.500" height="5" fill="#e0572d" />
          </svg>
          <span className="relative text-xs whitespace-nowrap text-black">新建报表1</span>
          <button aria-label="关闭标签" className="relative ml-1.5"><CloseIcon color="#000" /></button>
        </div>
        <div className="ml-auto flex items-center gap-1.5 pr-1">
          <button aria-label="标签列表"><Tri dir="down" fill="#15428b" size={9} /></button>
          <button aria-label="关闭"><CloseIcon /></button>
        </div>
      </div>
      <div className="flex min-h-0 flex-1 flex-col border-t border-[#e79b3d] bg-[#ffbf69] px-[5px] pt-[3px] pb-[5px]">
        <div className="flex min-h-0 flex-1 flex-col border-t border-l border-[#6d6d6d] border-r border-r-[#e0e0e0] bg-white pr-0.5">
          <div className="flex h-[22px] shrink-0 items-center border-b border-[#6d6d6d] pt-px pl-0.5">
            <input aria-label="单元格地址" defaultValue="A1" className="h-5 w-[120px] border border-[#b5b5b5] bg-[#f0f0f0] text-center font-['Liberation_Mono',monospace] text-xs text-black" />
            <button aria-label="插入函数" className="mr-0.5 ml-10 flex h-[18px] w-[18px] items-center justify-center border border-[#54709c] bg-linear-to-b from-[#e2edfa] to-[#a8c4ea] font-['Liberation_Serif',serif] text-sm leading-none text-[#31487a] italic">
              f<span className="text-[10px]">x</span>
            </button>
            <input aria-label="公式" className="h-5 min-w-0 flex-1 border border-[#b5b5b5] bg-white" />
            <div className="flex w-4 flex-col items-center bg-[#f0f0f0] py-0.5">
              <Tri dir="up" fill="#707070" size={8} />
              <Tri dir="down" fill="#707070" size={8} />
            </div>
          </div>
          <div className="flex min-h-0 flex-1 bg-[#c0c0c0] pl-0.5">
            <div className="relative min-w-0 flex-1 overflow-hidden">
              <Sheet />
              <p className="absolute top-[123px] left-[273px] text-2xl leading-8 font-medium whitespace-nowrap text-[#ff0000]">模板设计区域</p>
            </div>
            <div className="flex w-4 shrink-0 flex-col bg-[#7296bf]">
              <button aria-label="向上滚动" className={scrollBtn}><Tri dir="up" size={9} /></button>
              <div className="mt-0.5 flex-1 border border-[#54709c] bg-linear-to-r from-[#dde9f9] to-[#a9c5ec]" />
              <button aria-label="向下滚动" className={scrollBtn}><Tri dir="down" size={9} /></button>
            </div>
          </div>
          <div className="flex h-[17px] shrink-0 border-b border-[#54709c] bg-linear-to-b from-[#7f9fd0] to-[#a9c3e8] pl-0.5">
            {["首页", "上一张", "下一张", "末页", "新建"].map((n, i) => (
              <button key={n} aria-label={n} className="flex w-[17px] items-center justify-center border-r border-[#b4cdf0] bg-[#cfdff5]">
                <NavGlyph kind={i} />
              </button>
            ))}
            <button className="relative w-[60px] pt-px pr-2.5 font-['Liberation_Mono',monospace] text-[10px] leading-4 text-black">
              <svg viewBox="0 0 60 16" className="absolute inset-0 h-4 w-[60px]" aria-hidden="true"><path d="M0 0h60L45 16H4L0 12z" fill="#fff" /></svg>
              <span className="relative">Sheet1</span>
            </button>
            <div className="ml-auto w-1 border-x border-[#7f9fd0] bg-[#cfdff5]" />
            <div className="flex w-[328px] bg-[#7296bf]">
              <button aria-label="向左滚动" className={scrollBtn}><Tri dir="left" size={9} /></button>
              <div className="h-4 w-[265px] border border-l-0 border-[#54709c] bg-linear-to-b from-[#dde9f9] to-[#b4cdf0]" />
              <span className="flex-1" />
              <button aria-label="向右滚动" className={scrollBtn}><Tri dir="right" size={9} /></button>
            </div>
            <div className="w-4 bg-[#7f9fd0]" />
          </div>
          <form className="flex h-[108px] shrink-0 flex-col justify-between px-2.5 pt-[3px] pb-2.5 text-xs text-black">
            <div className="flex gap-2.5">
              <fieldset className="h-[67px] w-[266px] rounded-[4px] border border-[#d5dfe5] px-3">
                <legend className="-ml-[7px] px-0.5 leading-4">单元格类型</legend>
                <div className="flex gap-[13px] pt-0.5">
                  {radios.map((r, i) => (
                    <label key={r} className="flex items-center gap-[3px] leading-5">
                      <input
                        type="radio"
                        name="cellType"
                        defaultChecked={i === 0}
                        className="size-3 appearance-none rounded-full border border-[#8e8f8f] bg-[#ececec] checked:bg-[radial-gradient(circle,#5cc4f2_0,#0b4a7a_45%,#f0f0f0_55%)]"
                      />
                      {r}
                    </label>
                  ))}
                </div>
              </fieldset>
              <fieldset className="h-[67px] w-[209px] rounded-[4px] border border-[#d5dfe5] px-[13px]">
                <legend className="-ml-2 px-0.5 leading-4">搜寻导航格</legend>
                <LabeledSelect id="vsearch" label="纵向搜寻:" value="先上后下" />
                <LabeledSelect id="hsearch" label="横向搜寻:" value="先左后右" />
              </fieldset>
            </div>
            <label className="flex items-center gap-[3px] leading-4">
              <input type="checkbox" className="size-[13px] appearance-none border border-[#8e8f8f] bg-linear-to-br from-[#d8d8d8] to-white" />
              统计格
            </label>
          </form>
        </div>
      </div>
    </main>
  );
}

/* ---------- right panel ---------- */

type Prop = { name: string; value?: string; check?: boolean; swatch?: boolean; group?: boolean };

const PROPS: Prop[] = [
  { name: "常规", group: true },
  { name: "名称" },
  { name: "显示值" },
  { name: "缺省值" },
  { name: "内容隐藏", check: true },
  { name: "显示方式", value: "默认" },
  { name: "数字", group: true },
  { name: "格式", value: "常规" },
  { name: "格式化串" },
  { name: "对齐", group: true },
  { name: "水平对齐", value: "左对齐" },
  { name: "垂直对齐", value: "垂直居中" },
  { name: "自动换行", check: true },
  { name: "字体", group: true },
  { name: "名称", value: "宋体" },
  { name: "大小", value: "9" },
  { name: "粗体", check: true },
  { name: "斜体", check: true },
  { name: "下划线", value: "无" },
  { name: "删除线", check: true },
  { name: "字体颜色", value: "RGB(0,0,0)", swatch: true },
  { name: "缩放方式", value: "不缩放" },
];

function RightPanel() {
  const tabs = ["报表", "单元格", "行", "列", "工作表"];
  return (
    <aside className="flex w-[246px] shrink-0 flex-col border-x border-[#d3e3f5]">
      <PanelHeader title="单元格" />
      <div className="flex min-h-0 flex-1 flex-col bg-[#f0f0f0]">
        <div className="relative min-h-0 flex-1 overflow-hidden border-r-4 border-b border-r-white border-b-[#9aa5b5]">
          <table className="w-full table-fixed border-collapse text-left text-xs text-black">
            <colgroup>
              <col className="w-[15px]" />
              <col className="w-[65px]" />
              <col className="w-20" />
              <col className="w-20" />
            </colgroup>
            <thead>
              <tr className="h-5 bg-linear-to-b from-[#fdfdfd] to-[#d9d9d9] text-center leading-[18px] font-bold">
                <th colSpan={2} className="border-r border-b border-[#7a9cc5] pl-2">属性名称</th>
                <th className="border-r border-b border-[#7a9cc5]">值</th>
                <th className="border-b border-[#7a9cc5]">表达式</th>
              </tr>
            </thead>
            <tbody>
              {PROPS.map((p, i) =>
                p.group ? (
                  <tr key={i} className="h-[17px] leading-4">
                    <td className="p-0 pl-[3px]">
                      <svg width="9" height="9" viewBox="0 0 9 9" aria-hidden="true">
                        <path d="M.5.5h8v8h-8zM2 4.500h5" fill="none" stroke="#000" />
                      </svg>
                    </td>
                    <th colSpan={3} className="p-0 pl-[3px] font-bold">{p.name}</th>
                  </tr>
                ) : (
                  <tr key={i} className="h-[17px] leading-4">
                    <td className="p-0" />
                    <th className="border-r border-b border-[#ececec] bg-white p-0 pl-[3px] font-normal whitespace-nowrap">{p.name}</th>
                    <td className="border-r border-b border-[#ececec] bg-white p-0 pl-[3px] whitespace-nowrap">
                      {p.check ? (
                        <input type="checkbox" aria-label={p.name} className="block size-[13px] appearance-none border border-[#1c5180] bg-linear-to-br from-[#dcdcd7] to-white" />
                      ) : p.swatch ? (
                        <span className="flex items-center gap-1 text-[11px] leading-4">
                          <span className="h-3 w-[17px] shrink-0 bg-black" />
                          {p.value}
                        </span>
                      ) : (
                        p.value
                      )}
                    </td>
                    <td className="border-b border-[#ececec] bg-white p-0" />
                  </tr>
                ),
              )}
            </tbody>
          </table>
          <div className="absolute top-5 right-0 bottom-0 flex w-4 flex-col items-center bg-[#f0f0f0]">
            <button aria-label="向上滚动" className="flex h-[18px] shrink-0 items-center"><Tri dir="up" fill="#404040" size={7} /></button>
            <div className="flex h-[140px] w-[15px] shrink-0 items-center justify-center rounded-sm border border-[#979797] bg-linear-to-r from-[#f5f5f5] to-[#cfcfcf]">
              <svg width="8" height="8" viewBox="0 0 8 8" aria-hidden="true"><path d="M0 .5h8M0 3.500h8M0 6.500h8" stroke="#606060" /></svg>
            </div>
            <span className="flex-1" />
            <button aria-label="向下滚动" className="flex h-[18px] shrink-0 items-center"><Tri dir="down" fill="#404040" size={7} /></button>
          </div>
          <p className="absolute top-[226px] left-[107px] text-2xl leading-8 font-medium whitespace-nowrap text-[#ff0000]">属性栏</p>
        </div>
        <div className="mt-px mr-1.5 ml-px h-20 shrink-0 border border-[#9aa5b5] bg-[#f0f0f0]" />
        <div className="mt-0.5 flex h-[29px] shrink-0 gap-px border-t border-[#9aa5b5] bg-white px-0.5 pt-[3px] text-xs text-black">
          {tabs.map((t) => (
            <button
              key={t}
              className={
                t === "单元格"
                  ? "h-[25px] w-[51px] border-r border-b border-[#75757f] bg-white font-bold"
                  : "h-[22px] flex-1 border-r-2 border-b border-[#75757f] bg-linear-to-b from-[#f5f5f5] to-[#d3d3d3] whitespace-nowrap"
              }
            >
              {t}
            </button>
          ))}
        </div>
      </div>
    </aside>
  );
}

/* ---------- window ---------- */

export default function App() {
  return (
    <div className="flex h-screen flex-col overflow-hidden rounded-t-lg border border-[#3a4656] bg-linear-to-b from-[#c5daee] to-[#bcd8f3] font-['Open_Sans','Noto_Sans_CJK_SC',sans-serif] [&_button]:cursor-default">
      <TitleBar />
      <div className="mx-1.5 mb-1.5 flex min-h-0 flex-1 flex-col border border-[#53657c] bg-[#bfdbff]">
        <MenuTabs />
        <Ribbon />
        <div className="flex min-h-0 flex-1 gap-0.5 border-t-2 border-[#86a8d8] bg-[#7297cb] px-0.5 pt-0.5 pb-px">
          <LeftPanel />
          <Center />
          <RightPanel />
        </div>
        <footer className="grid h-[23px] shrink-0 grid-cols-[51fr_49fr] items-center border-t border-[#5677ad] bg-linear-to-b from-[#dcebff] via-[#abcbfb] via-45% to-[#c0dbff] text-xs text-[#15428b]">
          <span className="pl-[3px]">就绪</span>
          <span className="flex items-center border-l border-[#8a9bb5] pl-[3px] text-[#0c2a66]">
            <span className="flex-1 font-['Noto_Sans_CJK_SC',sans-serif]">服务器：144.20.80.220:8081 - 智能报表实例 - 演示用户</span>
            <svg width="11" height="11" viewBox="0 0 11 11" className="mr-0.5" aria-hidden="true">
              <path d="M8 0h2v2H8zM4 4h2v2H4zM8 4h2v2H8zM0 8h2v2H0zM4 8h2v2H4zM8 8h2v2H8z" fill="#5577b0" />
            </svg>
          </span>
        </footer>
      </div>
    </div>
  );
}
